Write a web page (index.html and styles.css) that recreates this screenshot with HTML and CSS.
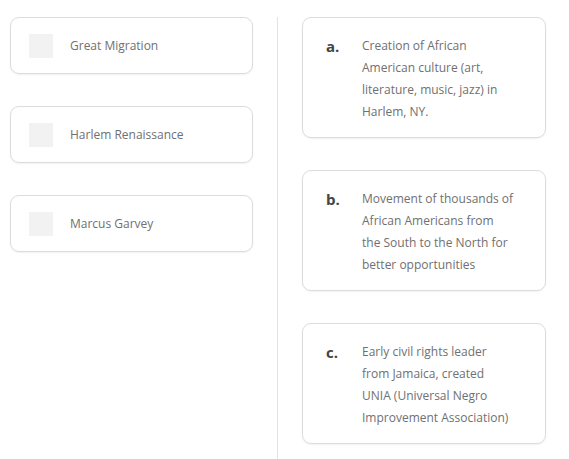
FILE: index.html
```html
<!DOCTYPE html>
<html>
<head>
<meta charset="utf-8">
<link rel="stylesheet" href="styles.css">
</head>
<body>
<div class="wrap">
  <div class="col-left">
    <div class="term"><span class="box"></span><span class="term-text">Great Migration</span></div>
    <div class="term"><span class="box"></span><span class="term-text">Harlem Renaissance</span></div>
    <div class="term"><span class="box"></span><span class="term-text">Marcus Garvey</span></div>
  </div>
  <div class="divider"></div>
  <div class="col-right">
    <div class="def"><span class="letter">a.</span><span class="def-text">Creation of African American culture (art, literature, music, jazz) in Harlem, NY.</span></div>
    <div class="def"><span class="letter">b.</span><span class="def-text">Movement of thousands of African Americans from the South to the North for better opportunities</span></div>
    <div class="def"><span class="letter">c.</span><span class="def-text">Early civil rights leader from Jamaica, created UNIA (Universal Negro Improvement Association)</span></div>
  </div>
</div>
</body>
</html>
```
FILE: styles.css
```css
html, body {
  margin: 0;
  padding: 0;
  background: #fff;
  font-family: "Open Sans", "Liberation Sans", sans-serif;
  overflow: hidden;
}
.wrap {
  display: flex;
  align-items: stretch;
  padding: 17px 0 0 10px;
  height: 459px;
  box-sizing: border-box;
}
.col-left {
  width: 243px;
  display: flex;
  flex-direction: column;
  gap: 32px;
}
.term {
  box-sizing: border-box;
  height: 57px;
  border: 1px solid #dcdcdc;
  border-radius: 9px;
  box-shadow: 0 1px 2px rgba(0,0,0,0.06);
  display: flex;
  align-items: center;
  padding-left: 18px;
}
.box {
  width: 24px;
  height: 24px;
  background: #f2f2f2;
  flex: none;
}
.term-text {
  margin-left: 17px;
  font-size: 12px;
  color: #707070;
}
.divider {
  width: 1px;
  background: #e3e3e3;
  margin: 0 24px 0 24px;
}
.col-right {
  width: 244px;
  display: flex;
  flex-direction: column;
  gap: 32px;
}
.def {
  box-sizing: border-box;
  border: 1px solid #dcdcdc;
  border-radius: 9px;
  box-shadow: 0 1px 2px rgba(0,0,0,0.06);
  display: flex;
  padding: 17px 0 15px 23px;
  height: 121px;
}
.letter {
  width: 36px;
  flex: none;
  font-weight: 700;
  font-size: 15px;
  color: #444;
  line-height: 22px;
}
.def-text {
  width: 153px;
  font-size: 12px;
  line-height: 22px;
  color: #707070;
}
```
